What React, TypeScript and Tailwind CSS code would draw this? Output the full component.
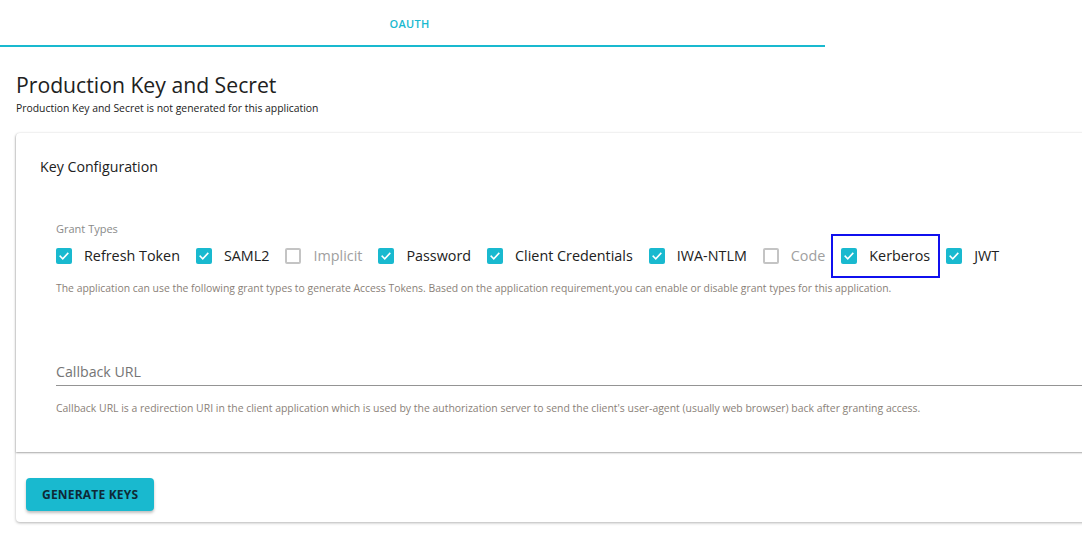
import React from "react";

const grants = [
    { label: "Refresh Token", checked: true },
    { label: "SAML2", checked: true },
    { label: "Implicit", checked: false },
    { label: "Password", checked: true },
    { label: "Client Credentials", checked: true },
    { label: "IWA-NTLM", checked: true },
    { label: "Code", checked: false },
    { label: "Kerberos", checked: true, focused: true },
    { label: "JWT", checked: true },
];

const Box: React.FC<{ checked: boolean }> = ({ checked }) =>
    checked ? (
        <span className="w-4 h-4 rounded-[2px] bg-[#19b9cf] flex items-center justify-center">
            <svg width="12" height="12" viewBox="0 0 24 24" fill="none" stroke="white" strokeWidth="3.2" strokeLinecap="square">
                <path d="M4.5 12.5l5 5L19.5 7" />
            </svg>
        </span>
    ) : (
        <span className="w-4 h-4 rounded-[2px] border-2 border-[#c4c4c4] bg-white" />
    );

const App: React.FC = () => {
    return (
        <div className="w-[1082px] h-[541px] overflow-hidden bg-white font-['Open_Sans',sans-serif]">
            <div className="w-[825px] h-[47px] border-b-2 border-[#19b9cf] flex justify-center pt-[16px] pr-[6px]">
                <span className="text-[11px] font-semibold text-[#19b9cf] tracking-[0.3px]">OAUTH</span>
            </div>

            <div className="pl-4 pt-[24px]">
                <h1 className="text-[21.2px] leading-[28px] text-[#212121]">Production Key and Secret</h1>
                <p className="text-[10.4px] leading-[16px] text-[#212121] mt-[1px]">Production Key and Secret is not generated for this application</p>

                <div className="mt-[17px] w-[1110px] rounded-[4px] shadow-[0_1px_3px_rgba(0,0,0,0.3)] bg-white">
                    <div className="rounded-t-[4px] shadow-[0_1px_2px_rgba(0,0,0,0.35)] pl-6 pt-[24px] pb-[37px]">
                        <h2 className="text-[14.2px] leading-[20px] text-[#212121]">Key Configuration</h2>

                        <div className="pl-4 pt-[44px]">
                            <div className="text-[11px] leading-[16px] text-[#8a8a8a]">Grant Types</div>
                            <div className="flex items-center -ml-2 -mt-[1px]">
                                {grants.map((g) => (
                                    <div
                                        key={g.label}
                                        className={
                                            "flex items-center h-10 px-2 gap-3 " +
                                            (g.focused ? "outline-2 outline-[#1010ee]" : "")
                                        }
                                    >
                                        <Box checked={g.checked} />
                                        <span className={"text-[14.35px] " + (g.checked ? "text-[#212121]" : "text-[#a0a0a0]")}>{g.label}</span>
                                    </div>
                                ))}
                            </div>
                            <p className="text-[10.4px] leading-[14px] text-[#8a7f78] mt-[5px]">
                                The application can use the following grant types to generate Access Tokens. Based on the application requirement,you can enable or disable grant types for this application.
                            </p>

                            <div className="mt-[64px] border-b border-[#949494] pb-[2px]">
                                <span className="text-[14.2px] leading-[20px] text-[#757575]">Callback URL</span>
                            </div>
                            <p className="text-[10.45px] leading-[14px] text-[#8a7f78] mt-[15px]">
                                Callback URL is a redirection URI in the client application which is used by the authorization server to send the client's user-agent (usually web browser) back after granting access.
                            </p>
                        </div>
                    </div>

                    <div className="px-[10px] pt-[26px] pb-[11px]">
                        <button className="h-[33px] px-4 rounded-[4px] bg-[#19b9cf] text-[#0f2a36] text-[12px] font-bold tracking-[0.2px] shadow-[0_2px_3px_rgba(0,0,0,0.25)]">
                            GENERATE KEYS
                        </button>
                    </div>
                </div>
            </div>
        </div>
    );
};

export default App;
